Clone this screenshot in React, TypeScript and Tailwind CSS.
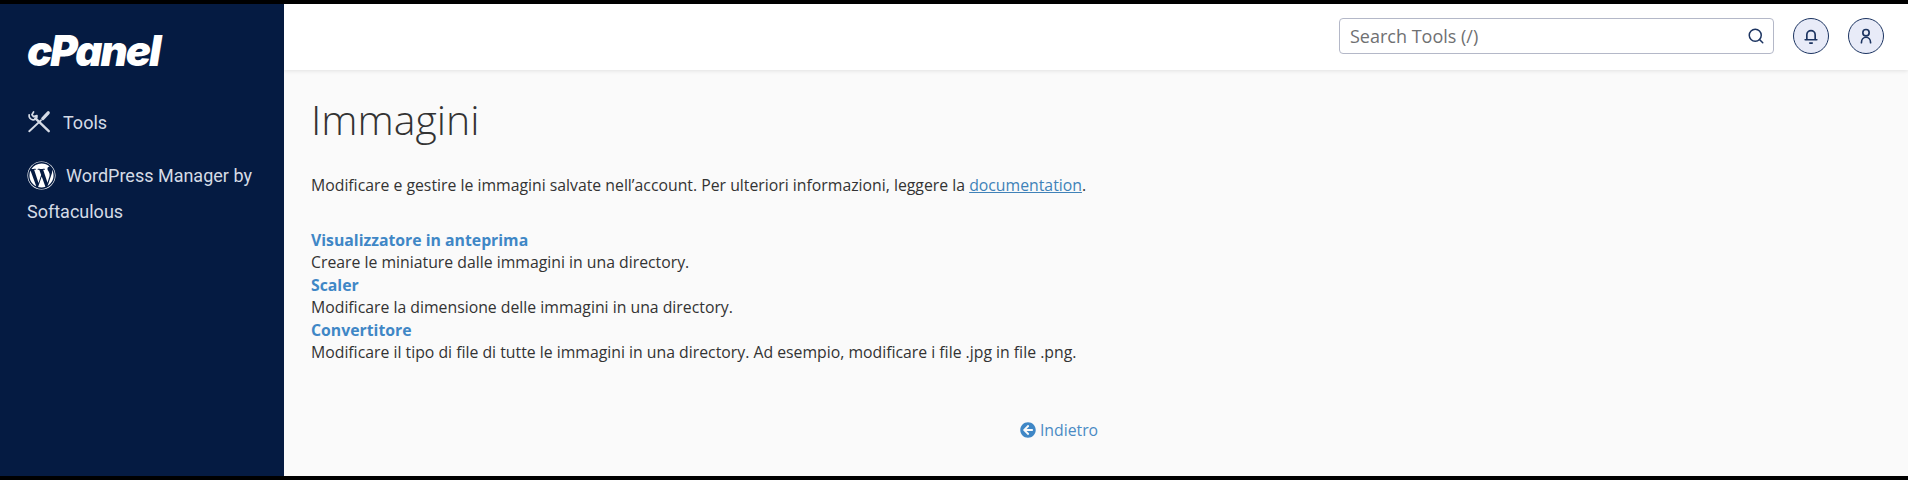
import { Search } from 'lucide-react';
import { FaWordpress, FaArrowCircleLeft } from 'react-icons/fa';

function ToolsIcon() {
  return (
    <svg viewBox="0 0 24 24" className="w-[26px] h-[26px] shrink-0 -ml-[1px] -mr-[1px]" fill="none" stroke="#d5dbe6" strokeLinecap="round" strokeLinejoin="round">
      {/* wrench */}
      <path d="M8.500 8.500L21 20.500" strokeWidth="2.200" />
      <path d="M7 3.200L5.500 5.800l1.300 1.700 2.400-.6.900-.2c.4 2-1.300 4-3.600 3.800-2.300-.2-4-2.200-3.600-4.500" strokeWidth="1.600" transform="translate(0 -0.500)" />
      {/* screwdriver */}
      <path d="M3 20.500L13.800 10.500" strokeWidth="1.800" />
      <path d="M15.500 8.800L20.500 3.500" strokeWidth="3" />
    </svg>
  );
}

function BellIcon() {
  return (
    <svg viewBox="0 0 24 24" className="w-[20px] h-[20px]" fill="none" stroke="#1c3461" strokeWidth="2" strokeLinecap="round">
      <path d="M7 16v-5.500a5 5 0 0 1 10 0V16" />
      <path d="M5 16.500h14" />
      <path d="M10.500 20.500h3" />
    </svg>
  );
}

function UserIcon() {
  return (
    <svg viewBox="0 0 24 24" className="w-[20px] h-[20px]" fill="none" stroke="#1c3461" strokeWidth="2" strokeLinecap="round">
      <circle cx="12" cy="8" r="3.800" />
      <path d="M6.500 20c0-4 2.500-6.500 5.500-6.500s5.500 2.500 5.500 6.500" />
    </svg>
  );
}

const tools = [
  { name: 'Visualizzatore in anteprima', text: 'Creare le miniature dalle immagini in una directory.' },
  { name: 'Scaler', text: 'Modificare la dimensione delle immagini in una directory.' },
  { name: 'Convertitore', text: 'Modificare il tipo di file di tutte le immagini in una directory. Ad esempio, modificare i file .jpg in file .png.' },
];

export default function App() {
  return (
    <div className="h-[480px] bg-black py-[4px] overflow-hidden font-['Open_Sans',sans-serif]">
      <div className="flex h-[472px]">
        {/* Sidebar */}
        <aside className="w-[284px] shrink-0 bg-[#051b42] pl-[27px] pr-[20px] font-['Roboto',sans-serif] text-[18px] text-[#d5dbe6]">
          <div className="pt-[25px] h-[82px]">
            <span className="block text-white text-[42px] leading-[44px] italic font-black tracking-[-2px] font-['Inter',sans-serif]">cPanel</span>
          </div>
          <div className="flex items-center gap-[12px] mt-[21px] h-[30px]">
            <ToolsIcon />
            <span>Tools</span>
          </div>
          <div className="mt-[21px] leading-[36px]">
            <FaWordpress className="inline-block text-white text-[29px] mr-[10px] align-[-8px]" />
            WordPress Manager by Softaculous
          </div>
        </aside>

        <div className="flex-1 flex flex-col min-w-0 bg-[#fafafa]">
          {/* Header */}
          <header className="h-[66px] shrink-0 bg-white shadow-[0_1px_4px_rgba(0,0,0,0.1)] flex items-center justify-end gap-[19px] pr-[24px] pb-[2px]">
            <div className="w-[435px] h-[36px] border border-[#b4b8c8] rounded-[4px] flex items-center justify-between pl-[10px] pr-[8px]">
              <span className="text-[#6f7072] text-[18px]">Search Tools (/)</span>
              <Search className="w-[18px] h-[18px] text-[#1c3461]" strokeWidth={2} />
            </div>
            <div className="w-[36px] h-[36px] rounded-full border border-[#1c3461] bg-[#e8ebf8] flex items-center justify-center">
              <BellIcon />
            </div>
            <div className="w-[36px] h-[36px] rounded-full border border-[#1c3461] bg-[#e8ebf8] flex items-center justify-center">
              <UserIcon />
            </div>
          </header>

          {/* Content */}
          <main className="px-[27px] text-[15.800px] leading-[22.500px] text-[#333333]">
            <h1 className="text-[41px] leading-[46px] font-light mt-[26px]">Immagini</h1>
            <p className="mt-[32px]">
              Modificare e gestire le immagini salvate nell’account. Per ulteriori informazioni, leggere la{' '}
              <a className="text-[#4082b8] underline">documentation</a>.
            </p>
            <div className="mt-[32px]">
              {tools.map((t) => (
                <div key={t.name}>
                  <a className="block font-bold text-[#3f87c6]">{t.name}</a>
                  <div>{t.text}</div>
                </div>
              ))}
            </div>
            <div className="mt-[55px] flex items-center justify-center gap-[4px] text-[#4a8ac4] pr-[74px]">
              <FaArrowCircleLeft className="text-[16px] text-[#3f87c6]" />
              <span>Indietro</span>
            </div>
          </main>
        </div>
      </div>
    </div>
  );
}
